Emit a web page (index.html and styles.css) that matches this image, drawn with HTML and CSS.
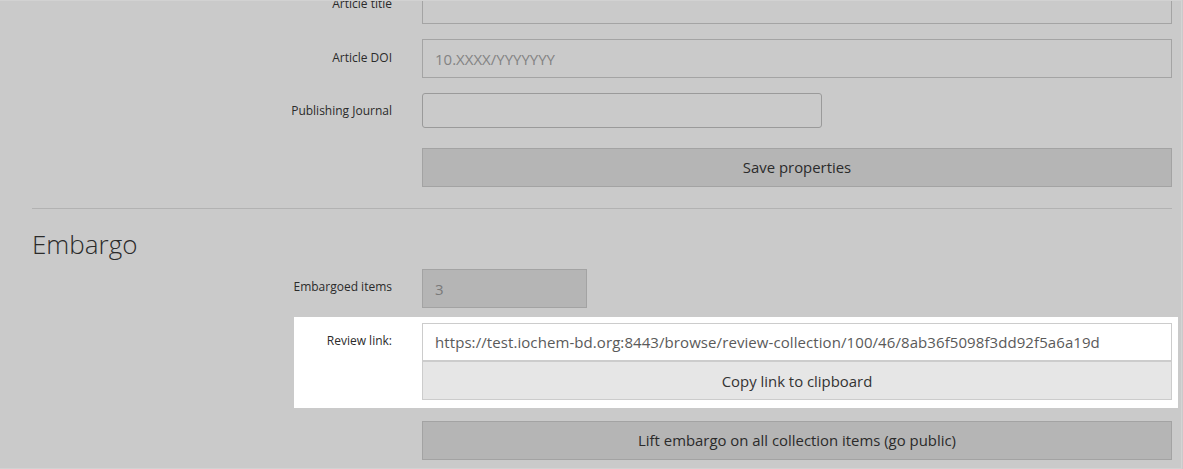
FILE: index.html
```html
<!DOCTYPE html>
<html>
<head>
<meta charset="utf-8">
<link rel="stylesheet" href="styles.css">
</head>
<body>
<div class="page">
  <form class="form">
    <div class="row row-title">
      <label class="lbl">Article title</label>
      <div class="field"><div class="input"></div></div>
    </div>
    <div class="row row-doi">
      <label class="lbl">Article DOI</label>
      <div class="field"><div class="input placeholder">10.XXXX/YYYYYYY</div></div>
    </div>
    <div class="row row-journal">
      <label class="lbl">Publishing Journal</label>
      <div class="field"><div class="input input-round"></div></div>
    </div>
    <div class="row row-save">
      <span></span>
      <div class="field"><div class="btn">Save properties</div></div>
    </div>
  </form>
  <hr class="sep">
  <h2 class="heading">Embargo</h2>
  <div class="row row-items">
    <label class="lbl">Embargoed items</label>
    <div class="field"><div class="input input-disabled">3</div></div>
  </div>
  <div class="highlight">
    <div class="hl-row">
      <label class="lbl">Review link:</label>
      <div class="field">
        <div class="input input-white">https://test.iochem-bd.org:8443/browse/review-collection/100/46/8ab36f5098f3dd92f5a6a19d</div>
        <div class="btn btn-light">Copy link to clipboard</div>
      </div>
    </div>
  </div>
  <div class="row row-lift">
    <span></span>
    <div class="field"><div class="btn">Lift embargo on all collection items (go public)</div></div>
  </div>
</div>
</body>
</html>
```

FILE: styles.css
```css
html {
  margin: 0;
  padding: 0;
  background: #cacaca;
}
body {
  margin: 0;
  padding: 0;
  box-sizing: border-box;
  background: #cacaca;
  font-family: "Open Sans", "DejaVu Sans", sans-serif;
  color: #2b2b2b;
  width: 1182px;
  height: 469px;
  overflow: hidden;
  border-top: 1px solid #d2d2d2;
  border-bottom: 1px solid #d2d2d2;
  border-right: 1px solid #d4d4d4;
}
.page {
  padding-left: 32px;
  width: 1140px;
}
.form {
  margin: -16px 0 0 0;
}
.row {
  display: grid;
  grid-template-columns: 360px 750px;
  column-gap: 30px;
}
.lbl {
  text-align: right;
  font-size: 12px;
  line-height: 17px;
  padding-top: 10px;
  color: #2b2b2b;
}
.input {
  box-sizing: border-box;
  height: 39px;
  border: 1px solid #a4a4a4;
  font-size: 15px;
  line-height: 20px;
  padding: 9px 12px 8px 12px;
  color: #666;
  white-space: nowrap;
  overflow: hidden;
}
.placeholder {
  color: #838383;
}
.input-round {
  width: 400px;
  height: 35px;
  border-color: #9a9a9a;
  border-radius: 3px;
}
.row-title, .row-doi {
  margin-bottom: 15px;
}
.row-journal {
  margin-bottom: 20px;
}
.row-journal .lbl {
  padding-top: 9px;
}
.btn {
  box-sizing: border-box;
  height: 39px;
  background: #b5b5b5;
  border: 1px solid #a3a3a3;
  text-align: center;
  font-size: 14.9px;
  line-height: 20px;
  padding: 8px 12px 9px 12px;
  color: #2b2b2b;
}
.sep {
  margin: 21px 0 0 0;
  border: 0;
  border-top: 1px solid #b2b2b2;
  height: 0;
}
.heading {
  margin: 17px 0 7px 0;
  font-size: 26px;
  line-height: 36px;
  font-weight: 300;
  color: #2b2b2b;
}
.row-items .lbl {
  padding-top: 9px;
}
.input-disabled {
  width: 165px;
  background: #b5b5b5;
  border-color: #a3a3a3;
  color: #7a7a7a;
}
.highlight {
  background: #ffffff;
  margin: 9px -6px 13px 262px;
  padding: 6px 6px 8px 0;
}
.hl-row {
  display: grid;
  grid-template-columns: 98px 750px;
  column-gap: 30px;
}
.hl-row .lbl {
  padding-top: 9px;
}
.input-white {
  height: 38px;
  padding-top: 8px;
  background: #fff;
  border-color: #cccccc;
  color: #5a5a5a;
  letter-spacing: 0.08px;
}
.btn-light {
  background: #e6e6e6;
  border-color: #cccccc;
  padding-top: 9px;
  padding-bottom: 8px;
  color: #333;
}
```
